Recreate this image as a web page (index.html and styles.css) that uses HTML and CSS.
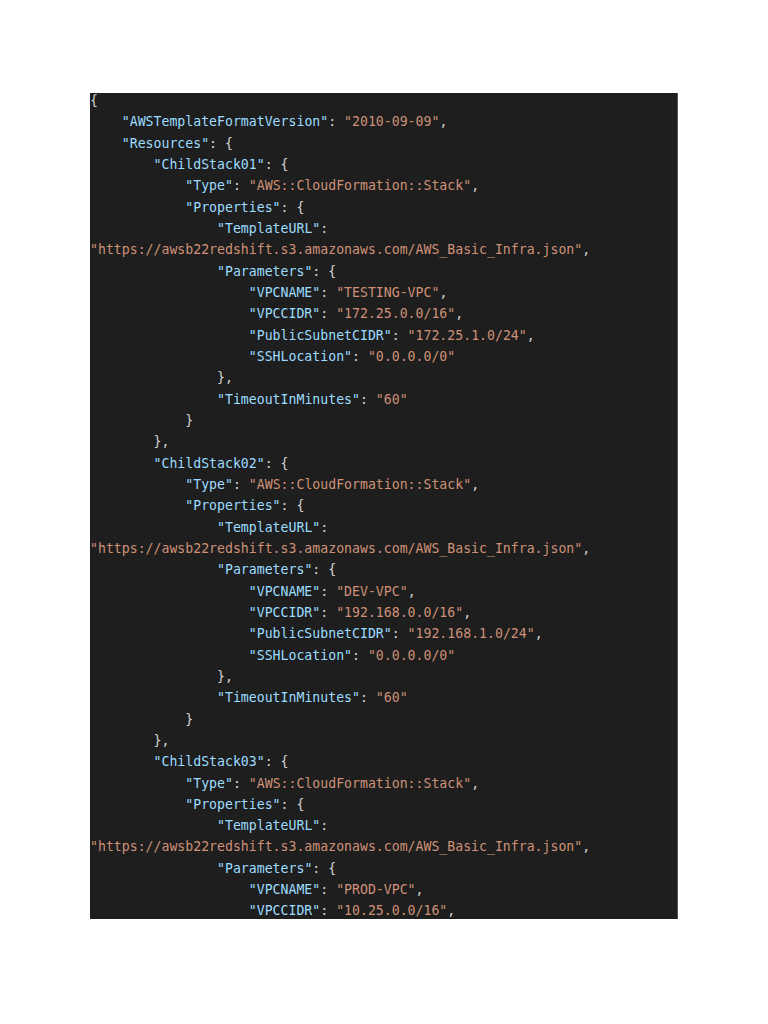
FILE: index.html
```html
<!DOCTYPE html>
<html>
<head>
<meta charset="utf-8">
<link rel="stylesheet" href="styles.css">
</head>
<body>
<div class="page">
<div class="code">
<pre class="src"><span class="p">{</span>
    <span class="k">"AWSTemplateFormatVersion"</span><span class="p">: </span><span class="s">"2010-09-09"</span><span class="p">,</span>
    <span class="k">"Resources"</span><span class="p">: {</span>
        <span class="k">"ChildStack01"</span><span class="p">: {</span>
            <span class="k">"Type"</span><span class="p">: </span><span class="s">"AWS::CloudFormation::Stack"</span><span class="p">,</span>
            <span class="k">"Properties"</span><span class="p">: {</span>
                <span class="k">"TemplateURL"</span><span class="p">:</span>
<span class="s">"https://awsb22redshift.s3.amazonaws.com/AWS_Basic_Infra.json"</span><span class="p">,</span>
                <span class="k">"Parameters"</span><span class="p">: {</span>
                    <span class="k">"VPCNAME"</span><span class="p">: </span><span class="s">"TESTING-VPC"</span><span class="p">,</span>
                    <span class="k">"VPCCIDR"</span><span class="p">: </span><span class="s">"172.25.0.0/16"</span><span class="p">,</span>
                    <span class="k">"PublicSubnetCIDR"</span><span class="p">: </span><span class="s">"172.25.1.0/24"</span><span class="p">,</span>
                    <span class="k">"SSHLocation"</span><span class="p">: </span><span class="s">"0.0.0.0/0"</span>
                <span class="p">},</span>
                <span class="k">"TimeoutInMinutes"</span><span class="p">: </span><span class="s">"60"</span>
            <span class="p">}</span>
        <span class="p">},</span>
        <span class="k">"ChildStack02"</span><span class="p">: {</span>
            <span class="k">"Type"</span><span class="p">: </span><span class="s">"AWS::CloudFormation::Stack"</span><span class="p">,</span>
            <span class="k">"Properties"</span><span class="p">: {</span>
                <span class="k">"TemplateURL"</span><span class="p">:</span>
<span class="s">"https://awsb22redshift.s3.amazonaws.com/AWS_Basic_Infra.json"</span><span class="p">,</span>
                <span class="k">"Parameters"</span><span class="p">: {</span>
                    <span class="k">"VPCNAME"</span><span class="p">: </span><span class="s">"DEV-VPC"</span><span class="p">,</span>
                    <span class="k">"VPCCIDR"</span><span class="p">: </span><span class="s">"192.168.0.0/16"</span><span class="p">,</span>
                    <span class="k">"PublicSubnetCIDR"</span><span class="p">: </span><span class="s">"192.168.1.0/24"</span><span class="p">,</span>
                    <span class="k">"SSHLocation"</span><span class="p">: </span><span class="s">"0.0.0.0/0"</span>
                <span class="p">},</span>
                <span class="k">"TimeoutInMinutes"</span><span class="p">: </span><span class="s">"60"</span>
            <span class="p">}</span>
        <span class="p">},</span>
        <span class="k">"ChildStack03"</span><span class="p">: {</span>
            <span class="k">"Type"</span><span class="p">: </span><span class="s">"AWS::CloudFormation::Stack"</span><span class="p">,</span>
            <span class="k">"Properties"</span><span class="p">: {</span>
                <span class="k">"TemplateURL"</span><span class="p">:</span>
<span class="s">"https://awsb22redshift.s3.amazonaws.com/AWS_Basic_Infra.json"</span><span class="p">,</span>
                <span class="k">"Parameters"</span><span class="p">: {</span>
                    <span class="k">"VPCNAME"</span><span class="p">: </span><span class="s">"PROD-VPC"</span><span class="p">,</span>
                    <span class="k">"VPCCIDR"</span><span class="p">: </span><span class="s">"10.25.0.0/16"</span><span class="p">,</span></pre>
</div>
</div>
</body>
</html>
```

FILE: styles.css
```css
html, body {
  margin: 0;
  padding: 0;
  background: #ffffff;
}

.page {
  padding-top: 93px;
  padding-left: 90px;
}

.code {
  width: 588px;
  height: 826px;
  background: #1e1e1e;
  overflow: hidden;
  border-right: 1px solid #555;
  box-sizing: border-box;
}

.src {
  margin: -3px 0 0 0;
  font-family: "DejaVu Sans Mono", monospace;
  font-size: 13.2px;
  line-height: 21.33px;
  color: #d4d4d4;
  white-space: pre;
}

.k { color: #9cdcfe; }
.s { color: #ce9178; }
.p { color: #d4d4d4; }
```
